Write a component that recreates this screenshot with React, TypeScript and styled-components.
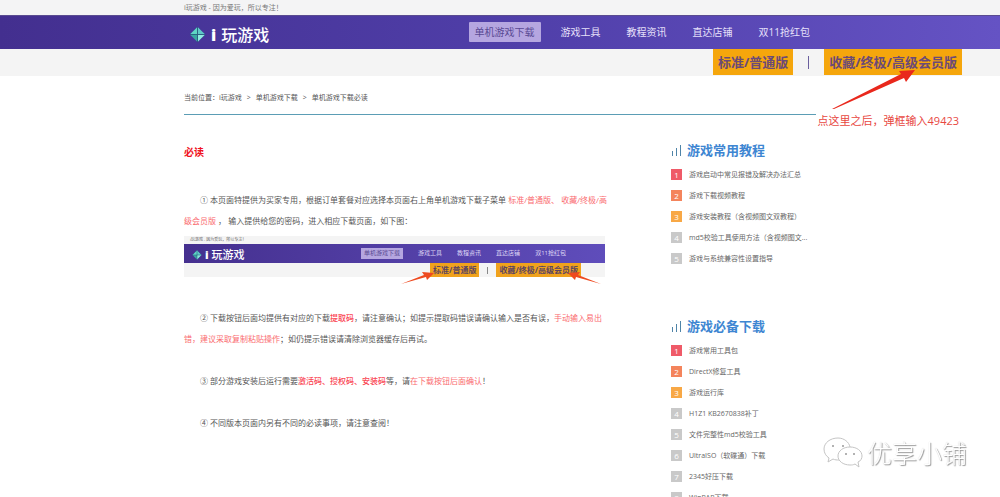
import React from 'react';
import styled, { createGlobalStyle, css } from 'styled-components';

const GlobalStyle = createGlobalStyle`
  * { box-sizing: border-box; }
  body {
    margin: 0;
    background: #fff;
    color: #555;
    font-family: 'Open Sans', 'Noto Sans CJK SC', sans-serif;
    font-size: 8px;
    line-height: 21px;
  }
  a { color: inherit; text-decoration: none; }
  ul, ol { list-style: none; margin: 0; padding: 0; }
  h1, h2, p, figure { margin: 0; }
`;

const Page = styled.div`
  position: relative;
  overflow: hidden;
`;

const Container = styled.div`
  width: 100%;
  max-width: 632px;
  margin: 0 auto;
`;

const TopBar = styled.div`
  background: #f4f4f5;
  font-size: 7px;
  line-height: 15px;
  color: #777;
`;

const Header = styled.header`
  background: linear-gradient(90deg, #432f8f, #4f3ea8 50%, #6553c4);
  border-top: 1px solid #5a4c90;
`;

const HeaderRow = styled(Container)`
  display: flex;
  align-items: center;
  justify-content: space-between;
  height: 33px;
  padding: 0 0 2px 5px;
`;

const Logo = styled.a<{ $small?: boolean }>`
  display: flex;
  align-items: center;
  gap: ${p => (p.$small ? 3 : 5)}px;
  color: #fff;
  font-size: ${p => (p.$small ? 11 : 16)}px;
  font-weight: 500;
  line-height: 1;
  white-space: nowrap;
  padding-top: ${p => (p.$small ? 2 : 6)}px;

  b { font-weight: 800; }
`;

const Nav = styled.nav`
  display: flex;
  align-items: center;
  gap: 14px;
`;

const NavLink = styled.a<{ $active?: boolean }>`
  padding: 0 6px;
  border-radius: 1px;
  font-size: 10px;
  line-height: 20px;
  color: #e6e0fa;
  white-space: nowrap;
  ${p => p.$active && css`
    background: #b5a6e0;
    color: #594993;
  `}
`;

const SubBar = styled.div`
  display: flex;
  justify-content: flex-end;
  align-items: flex-start;
  height: 27px;
  padding-right: 38px;
  background: #f4f4f4;
  gap: 15px;
`;

const VersionLink = styled.a`
  padding: 0 5px;
  background: #f5a60c;
  color: #6b4a78;
  font-size: 13px;
  font-weight: 700;
  line-height: 26px;
  white-space: nowrap;
`;

const Divider = styled.span`
  align-self: center;
  width: 1px;
  height: 13px;
  background: #6a5f9e;
`;

const Crumbs = styled.nav`
  display: flex;
  gap: 5px;
  padding: 11px 0 6px;
  border-bottom: 1px solid #5b9db5;
  font-size: 7px;
  white-space: nowrap;
`;

const Columns = styled.div`
  display: flex;
  gap: 66px;
`;

const Article = styled.main`
  flex: 1;
  min-width: 0;
  padding-top: 27px;
`;

const Title = styled.h1`
  font-size: 10px;
  line-height: 21px;
  color: #f0131e;
  margin-bottom: 26px;
`;

const Paragraph = styled.p`
  text-indent: 16px;
  margin-bottom: 21px;
  white-space: nowrap;
`;

const Red = styled.span<{ $strong?: boolean }>`
  color: ${p => (p.$strong ? '#fa4553' : '#fa6b6f')};
  font-weight: ${p => (p.$strong ? 500 : 400)};
`;

const Figure = styled.figure`
  position: relative;
  height: 55px;
  margin: -16px 0 16px;
`;

const MiniTop = styled.div`
  padding-left: 6px;
  background: #f4f4f4;
  font-size: 4px;
  line-height: 8px;
  color: #666;
`;

const MiniHeader = styled.div`
  display: flex;
  align-items: center;
  justify-content: space-between;
  height: 19px;
  padding: 0 39px 0 8px;
  background: linear-gradient(90deg, #45308f, #5f4dbb);
`;

const MiniNav = styled.div`
  display: flex;
  align-items: center;
  gap: 15px;
`;

const MiniLink = styled.span<{ $active?: boolean }>`
  font-size: 6px;
  line-height: 11px;
  color: #ded6f5;
  white-space: nowrap;
  ${p => p.$active && css`
    background: #b5a6e0;
    color: #594993;
    padding: 0 3px;
  `}
`;

const MiniSub = styled.div`
  display: flex;
  align-items: center;
  justify-content: flex-end;
  gap: 8px;
  height: 14px;
  padding-right: 24px;
  background: #f4f4f4;
`;

const MiniVersion = styled.span`
  padding: 0 3px;
  background: #f0a21c;
  color: #5c4560;
  font-size: 8px;
  font-weight: 700;
  line-height: 14px;
  white-space: nowrap;
`;

const MiniDivider = styled.span`
  width: 1px;
  height: 7px;
  background: #888;
`;

const MiniArrow = styled.svg<{ $right: number }>`
  position: absolute;
  right: ${p => p.$right}px;
  top: 36px;
`;

const Sidebar = styled.aside`
  width: 145px;
  padding-top: 24px;
`;

const Panel = styled.section`
  margin-bottom: 46px;
`;

const PanelTitle = styled.h2`
  display: flex;
  align-items: center;
  gap: 5px;
  margin-bottom: 3px;
  font-size: 13px;
  line-height: 22px;
  color: #3e86d2;
  white-space: nowrap;
`;

const Item = styled.li`
  display: flex;
  align-items: center;
  gap: 7px;
  height: 21px;
  font-size: 7px;
  color: #666;
  white-space: nowrap;
`;

const rankColors = ['#ef5a68', '#f4845c', '#f8a846'];

const Rank = styled.span<{ $rank: number }>`
  width: 11px;
  height: 11px;
  background: ${p => rankColors[p.$rank - 1] ?? '#c9c9c9'};
  color: #fff;
  font-size: 8px;
  line-height: 11px;
  text-align: center;
`;

const Note = styled.div`
  position: absolute;
  top: 66px;
  right: 41px;
  padding-top: 44px;
  font-size: 11px;
  color: #e8483f;
  white-space: nowrap;
`;

const NoteArrow = styled.svg`
  position: absolute;
  left: 13px;
  top: 0;
`;

const Watermark = styled.div`
  position: fixed;
  right: 33px;
  bottom: 26px;
  display: flex;
  align-items: center;
  gap: 3px;
  color: #fff;
  font-size: 25px;
  font-weight: 300;
  line-height: 36px;
  text-shadow: 1px 1px 1px #999, 0 0 1px #ccc;
`;

function Gem({ size }: { size: number }) {
  return (
    <svg width={size} height={size} viewBox="0 0 18 18">
      <path d="M9 1 17 9 9 17 1 9Z" fill="#39a8a2" />
      <path d="M9 1V9H1Z" fill="#5fd6c4" />
      <path d="M9 1 13 7 9 9Z" fill="#b6f3ea" />
      <path d="M9 1 17 9H9Z" fill="#5fc9c8" />
      <path d="M9 9H17L9 17Z" fill="#8feae0" />
      <path d="M9 1V17M1 9H17" stroke="#285e80" strokeWidth="1" />
    </svg>
  );
}

function Bars() {
  return (
    <svg width="11" height="11" viewBox="0 0 11 11" fill="none" stroke="#4f84a8">
      <path d="M1.5 6V11M5.5 3V11M9.5 0V11" />
    </svg>
  );
}

const navItems = ['单机游戏下载', '游戏工具', '教程资讯', '直达店铺', '双11抢红包'];

const panels = [
  {
    title: '游戏常用教程',
    items: [
      '游戏启动中常见报错及解决办法汇总',
      '游戏下载视频教程',
      '游戏安装教程（含视频图文双教程）',
      'md5校验工具使用方法（含视频图文...',
      '游戏与系统兼容性设置指导',
    ],
  },
  {
    title: '游戏必备下载',
    items: [
      '游戏常用工具包',
      'DirectX修复工具',
      '游戏运行库',
      'H1Z1 KB2670838补丁',
      '文件完整性md5校验工具',
      'UltraISO（软碟通）下载',
      '2345好压下载',
      'WinRAR下载',
    ],
  },
];

export default function App() {
  return (
    <Page>
      <GlobalStyle />
      <TopBar>
        <Container>i玩游戏 - 因为爱玩，所以专注！</Container>
      </TopBar>
      <Header>
        <HeaderRow>
          <Logo href="#"><Gem size={17} /><b>i</b>玩游戏</Logo>
          <Nav>
            {navItems.map((t, i) => <NavLink href="#" key={t} $active={i === 0}>{t}</NavLink>)}
          </Nav>
        </HeaderRow>
      </Header>
      <SubBar>
        <VersionLink href="#">标准/普通版</VersionLink>
        <Divider />
        <VersionLink href="#">收藏/终极/高级会员版</VersionLink>
      </SubBar>
      <Container>
        <Crumbs>
          <span>当前位置：<a href="#">i玩游戏</a></span>
          <span>&gt;</span>
          <a href="#">单机游戏下载</a>
          <span>&gt;</span>
          <span>单机游戏下载必读</span>
        </Crumbs>
        <Columns>
          <Article>
            <Title>必读</Title>
            <Paragraph>
              ① 本页面特提供为买家专用，根据订单套餐对应选择本页面右上角单机游戏下载子菜单 <Red>标准/普通版、 收藏/终极/高<br />级会员版</Red> ， 输入提供给您的密码，进入相应下载页面，如下图：
            </Paragraph>
            <Figure>
              <MiniTop>i玩游戏 - 因为爱玩，所以专注！</MiniTop>
              <MiniHeader>
                <Logo as="span" $small><Gem size={10} /><b>i</b>玩游戏</Logo>
                <MiniNav>
                  {navItems.map((t, i) => <MiniLink key={t} $active={i === 0}>{t}</MiniLink>)}
                </MiniNav>
              </MiniHeader>
              <MiniSub>
                <MiniVersion>标准/普通版</MiniVersion>
                <MiniDivider />
                <MiniVersion>收藏/终极/高级会员版</MiniVersion>
              </MiniSub>
              <MiniArrow $right={170} width="34" height="13" viewBox="0 0 34 13">
                <path d="M0 12 23 3 21 0 33 1 26 8 25 5Z" fill="#ee4a20" />
              </MiniArrow>
              <MiniArrow $right={4} width="34" height="13" viewBox="0 0 34 13">
                <path d="M34 12 11 3 13 0 1 1 8 8 9 5Z" fill="#ee4a20" />
              </MiniArrow>
            </Figure>
            <Paragraph>
              ② 下载按钮后面均提供有对应的下载<Red $strong>提取码</Red>，请注意确认；如提示提取码错误请确认输入是否有误，<Red>手动输入易出<br />错，建议采取复制粘贴操作</Red>；如仍提示错误请清除浏览器缓存后再试。
            </Paragraph>
            <Paragraph>
              ③ 部分游戏安装后运行需要<Red $strong>激活码、授权码、安装码</Red>等，请<Red>在下载按钮后面确认</Red>！
            </Paragraph>
            <Paragraph>④ 不同版本页面内另有不同的必读事项，请注意查阅！</Paragraph>
          </Article>
          <Sidebar>
            {panels.map(p => (
              <Panel key={p.title}>
                <PanelTitle><Bars />{p.title}</PanelTitle>
                <ol>
                  {p.items.map((t, i) => (
                    <Item key={t}><Rank $rank={i + 1}>{i + 1}</Rank><a href="#">{t}</a></Item>
                  ))}
                </ol>
              </Panel>
            ))}
          </Sidebar>
        </Columns>
      </Container>
      <Note>
        <NoteArrow width="86" height="44" viewBox="0 0 86 44">
          <path d="M1 43 70 8 68 5 84 4 75 16 73 12 3 43Z" fill="#e9281c" />
        </NoteArrow>
        点这里之后，弹框输入49423
      </Note>
      <Watermark>
        <svg width="41" height="32" viewBox="0 0 41 32" fill="#fff" stroke="#c4c4c4" strokeWidth="1">
          <path d="M15 1C7 1 1 6 1 12c0 4 2 7 5 9l-1 4 5-3c2 1 4 1 6 1" />
          <path d="M15 1c6 0 11 4 12 9" fill="none" />
          <path d="M27 10c-7 0-12 4-12 9s5 9 12 9c2 0 3 0 5-1l4 3-1-5c3-1 4-4 4-6 0-5-5-9-12-9Z" />
          <g fill="#999" stroke="none">
            <circle cx="10" cy="9" r="1" /><circle cx="20" cy="9" r="1" />
            <circle cx="23" cy="17" r="1" /><circle cx="31" cy="17" r="1" />
          </g>
        </svg>
        优享小铺
      </Watermark>
    </Page>
  );
}
